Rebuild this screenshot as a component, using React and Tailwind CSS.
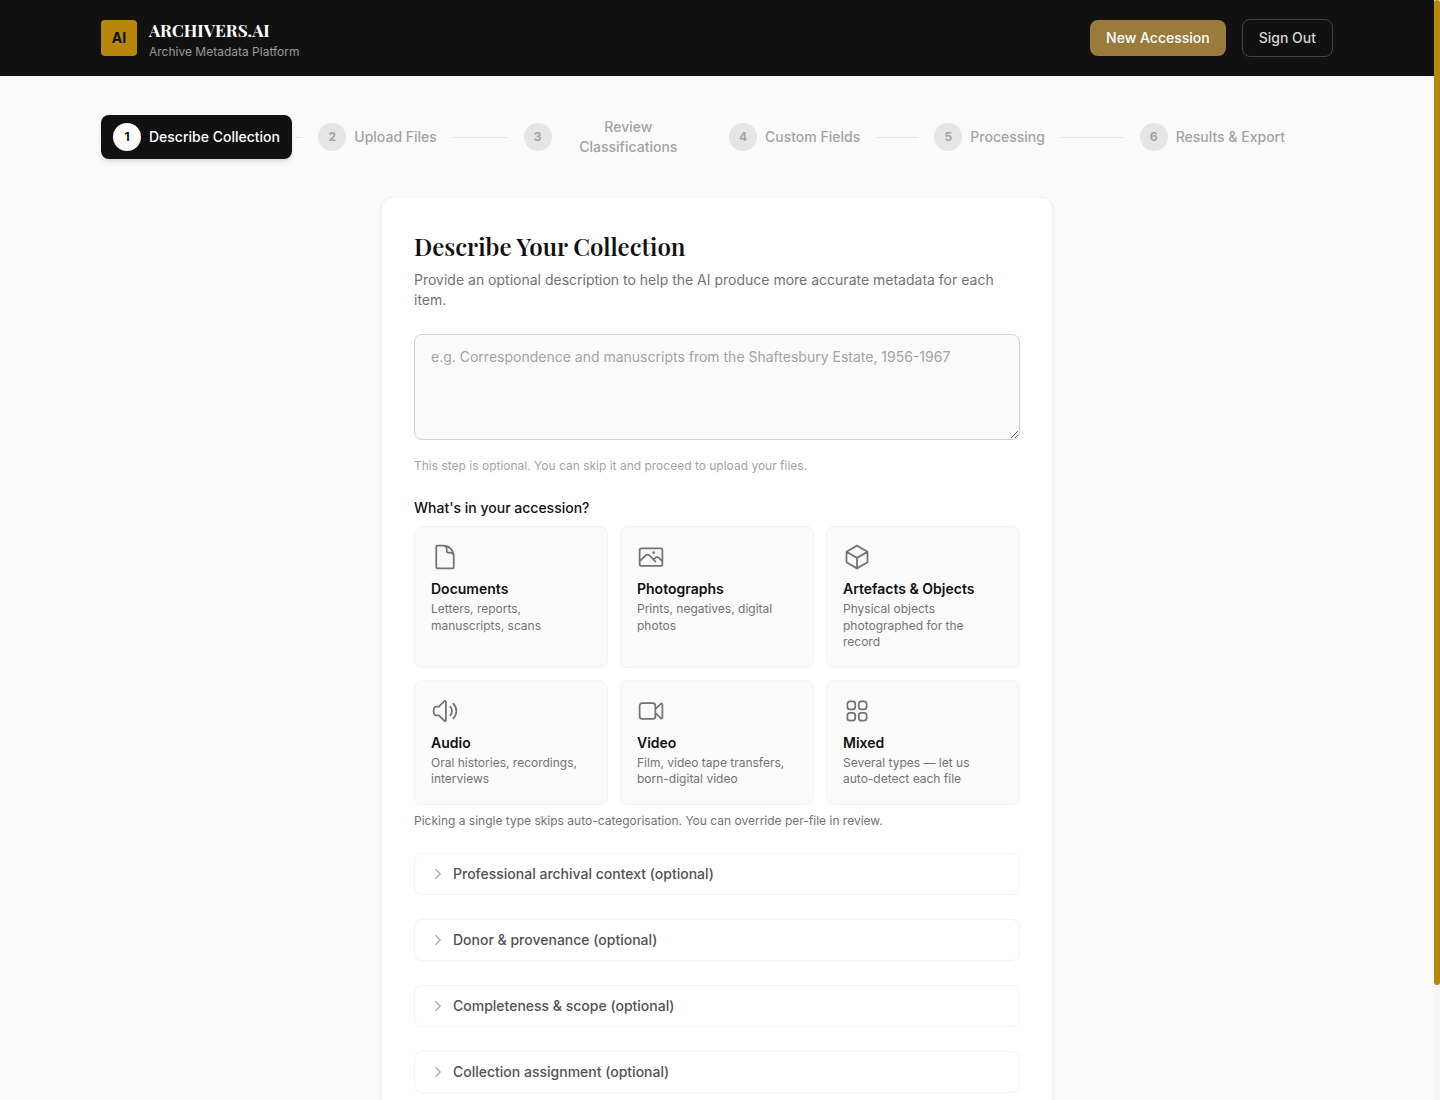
import {
  HiOutlineDocument,
  HiOutlinePhoto,
  HiOutlineCube,
  HiOutlineSpeakerWave,
  HiOutlineVideoCamera,
  HiOutlineSquares2X2,
  HiOutlineChevronRight,
} from "react-icons/hi2";

const steps = [
  "Describe Collection",
  "Upload Files",
  "Review Classifications",
  "Custom Fields",
  "Processing",
  "Results & Export",
];

const types = [
  { icon: HiOutlineDocument, title: "Documents", text: "Letters, reports, manuscripts, scans" },
  { icon: HiOutlinePhoto, title: "Photographs", text: "Prints, negatives, digital photos" },
  { icon: HiOutlineCube, title: "Artefacts & Objects", text: "Physical objects photographed for the record" },
  { icon: HiOutlineSpeakerWave, title: "Audio", text: "Oral histories, recordings, interviews" },
  { icon: HiOutlineVideoCamera, title: "Video", text: "Film, video tape transfers, born-digital video" },
  { icon: HiOutlineSquares2X2, title: "Mixed", text: "Several types — let us auto-detect each file" },
];

const sections = [
  "Professional archival context (optional)",
  "Donor & provenance (optional)",
  "Completeness & scope (optional)",
  "Collection assignment (optional)",
];

function Header() {
  return (
    <header className="bg-[#111111]">
      <div className="mx-auto flex max-w-7xl items-center justify-between px-6 py-4">
        <div className="flex items-center gap-3">
          <div className="flex size-9 items-center justify-center rounded bg-[#b8860b] text-sm font-bold text-[#111111]">
            AI
          </div>
          <div>
            <h1 className="font-['Playfair_Display','Liberation_Serif',serif] text-[17px] leading-7 font-bold text-white">
              ARCHIVERS.AI
            </h1>
            <p className="text-xs text-[#999999]">Archive Metadata Platform</p>
          </div>
        </div>
        <div className="flex items-center gap-4">
          <button type="button" className="rounded-lg bg-[#9a7b3c] px-4 py-2 text-sm font-medium text-white">
            New Accession
          </button>
          <button type="button" className="rounded-lg border border-[#444444] px-4 py-2 text-sm font-medium text-[#d4d4d4]">
            Sign Out
          </button>
        </div>
      </div>
    </header>
  );
}

function Stepper() {
  return (
    <nav aria-label="Progress" className="flex items-center">
      {steps.map((label, i) => {
        const active = i === 0;
        return (
          <div key={label} className="flex flex-1 items-center">
            <button
              type="button"
              className={
                active
                  ? "flex items-center gap-2 rounded-lg bg-[#111111] px-3 py-2 text-white shadow-md"
                  : "flex items-center gap-2 rounded-lg px-3 py-2 text-[#a3a3a3]"
              }
            >
              <span
                className={
                  active
                    ? "flex size-7 shrink-0 items-center justify-center rounded-full bg-white text-xs font-bold text-[#111111]"
                    : "flex size-7 shrink-0 items-center justify-center rounded-full bg-[#e5e5e5] text-xs font-bold text-[#a3a3a3]"
                }
              >
                {i + 1}
              </span>
              <span className="text-sm font-medium">{label}</span>
            </button>
            {i < steps.length - 1 && <div className="mx-1 h-px flex-1 bg-[#e5e5e5]" />}
          </div>
        );
      })}
    </nav>
  );
}

export default function App() {
  return (
    <div className="flex h-screen bg-[#fafafa] font-['Inter',sans-serif] text-[#111111]">
      <div className="min-w-0 flex-1 overflow-y-auto [scrollbar-width:none]">
        <Header />
        <main className="mx-auto max-w-7xl px-6 pt-[33px] pb-8">
          <Stepper />
          <section className="mx-auto mt-8 max-w-2xl rounded-xl border border-[#f3f3f3] bg-white px-8 pt-8 pb-26 shadow-sm">
            <h2 className="font-['Playfair_Display','Liberation_Serif',serif] text-2xl font-semibold">
              Describe Your Collection
            </h2>
            <p className="mt-2 text-sm text-[#737373]">
              Provide an optional description to help the AI produce more accurate metadata for each item.
            </p>
            <textarea
              rows={4}
              aria-label="Collection description"
              placeholder="e.g. Correspondence and manuscripts from the Shaftesbury Estate, 1956-1967"
              className="mt-6 block w-full resize-y rounded-lg border border-[#d4d4d4] bg-[#fafafa] px-4 py-3 text-sm placeholder:text-[#a3a3a3]"
            />
            <p className="mt-[18px] text-xs text-[#a3a3a3]">
              This step is optional. You can skip it and proceed to upload your files.
            </p>

            <h3 className="mt-6 text-sm font-medium">What's in your accession?</h3>
            <div className="mt-2 grid grid-cols-3 gap-3">
              {types.map(({ icon: Icon, title, text }) => (
                <button
                  key={title}
                  type="button"
                  className="flex flex-col items-start rounded-lg border border-[#f3f3f3] bg-[#fafafa] p-4 text-left"
                >
                  <Icon className="size-7 text-[#737373]" aria-hidden="true" />
                  <span className="mt-2 text-sm font-semibold">{title}</span>
                  <span className="mt-0.5 text-xs leading-snug text-[#737373]">{text}</span>
                </button>
              ))}
            </div>
            <p className="mt-2 text-xs text-[#737373]">
              Picking a single type skips auto-categorisation. You can override per-file in review.
            </p>

            <div className="mt-6 flex flex-col gap-6">
              {sections.map((label) => (
                <button
                  key={label}
                  type="button"
                  aria-expanded="false"
                  className="flex w-full items-center gap-2 rounded-lg border border-[#f3f3f3] px-4 py-2.5 text-left text-sm font-medium text-[#525252]"
                >
                  <HiOutlineChevronRight className="size-3.5 text-[#a3a3a3] [&_path]:stroke-2" aria-hidden="true" />
                  {label}
                </button>
              ))}
            </div>
          </section>
        </main>
      </div>
      <div className="w-1.5 shrink-0 bg-[#f5f5f5]" aria-hidden="true">
        <div className="h-[89.5%] rounded-[3px] bg-[#b8860b]" />
      </div>
    </div>
  );
}
